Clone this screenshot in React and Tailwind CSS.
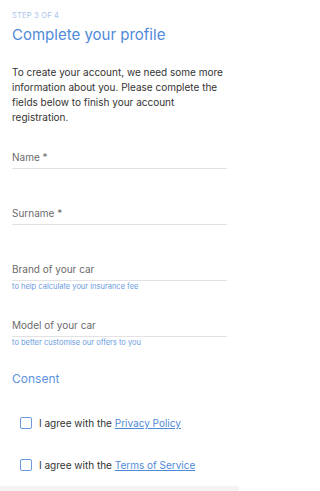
export default function App() {
  const fields = [
    { label: "Name *" },
    { label: "Surname *" },
    { label: "Brand of your car", hint: "to help calculate your insurance fee" },
    { label: "Model of your car", hint: "to better customise our offers to you" },
  ];

  return (
    <div
      className="w-[239px] h-[491px] bg-white flex flex-col"
      style={{ fontFamily: "Inter, 'Noto Sans', sans-serif" }}
    >
      <div className="flex-1 px-3 pt-[11px]">
        <p className="text-[7.5px] leading-[9px] tracking-[0.2px] text-[#a9c4ec] uppercase">Step 3 of 4</p>
        <h1 className="mt-[5px] text-[15px] leading-[20px] text-[#4f8ad8]">Complete your profile</h1>

        <p className="mt-[20px] text-[10px] leading-[15px] text-[#333]">
          To create your account, we need some more information about you. Please complete the
          fields below to finish your account registration.
        </p>

        <div className="mt-[25px] flex flex-col">
          {fields.map((f, i) => (
            <div key={f.label} className={i < fields.length - 1 ? "h-[56px]" : ""}>
              <div className="border-b border-[#e2e2e2] pb-[4px] text-[10px] leading-[14px] text-[#6b6b6b]">
                {f.label}
              </div>
              {f.hint && (
                <p className="mt-[1px] text-[7.5px] leading-[9px] text-[#6a9be0]">{f.hint}</p>
              )}
            </div>
          ))}
        </div>

        <h2 className="mt-[24px] text-[12px] leading-[16px] text-[#5b93dc]">Consent</h2>

        <div className="mt-[30px] pl-[8px] flex flex-col gap-[30px]">
          <label className="flex items-center gap-[7px] text-[10px] leading-[12px] text-[#333]">
            <span className="w-[12px] h-[12px] border-[1.5px] border-[#6a9be0] rounded-[2px]" />
            <span>
              I agree with the{" "}
              <a className="text-[#4f8ad8] underline">Privacy Policy</a>
            </span>
          </label>
          <label className="flex items-center gap-[7px] text-[10px] leading-[12px] text-[#333]">
            <span className="w-[12px] h-[12px] border-[1.5px] border-[#6a9be0] rounded-[2px]" />
            <span>
              I agree with the{" "}
              <a className="text-[#4f8ad8] underline">Terms of Service</a>
            </span>
          </label>
        </div>
      </div>
      <div className="h-[5px] bg-[#f4f4f4]" />
    </div>
  );
}
